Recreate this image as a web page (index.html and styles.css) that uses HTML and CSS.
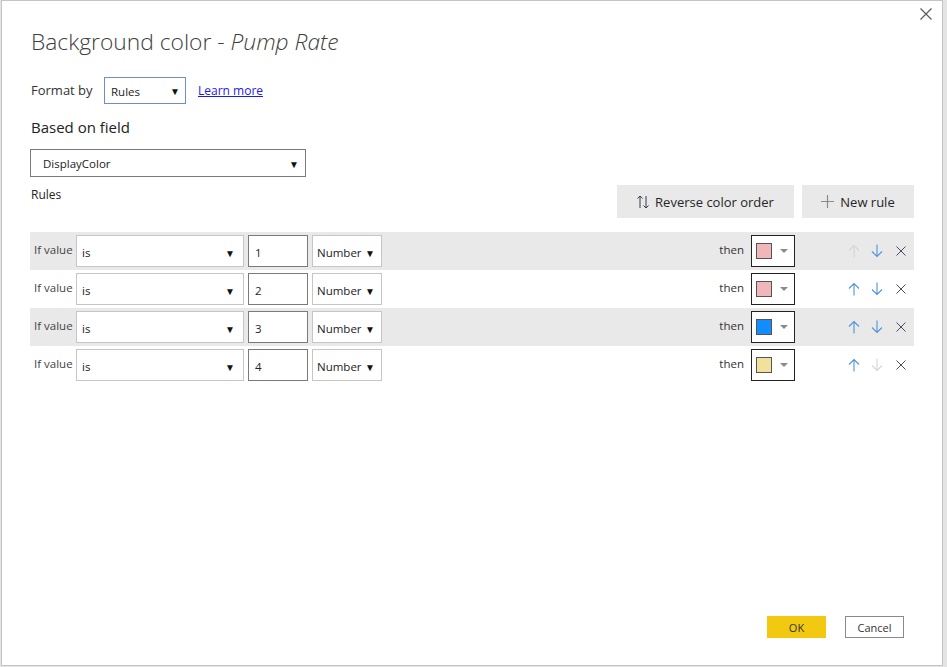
FILE: index.html
```html
<!DOCTYPE html>
<html>
<head>
<meta charset="utf-8">
<link rel="stylesheet" href="styles.css">
</head>
<body>
<div class="page">
  <div class="dialog">
    <div class="topbar">
      <svg class="close" width="12" height="12" viewBox="0 0 12 12"><path d="M0.5 0.5 L11.5 11.5 M11.5 0.5 L0.5 11.5" stroke="#5a5a5a" stroke-width="1.2" fill="none"/></svg>
    </div>
    <div class="content">
      <h1 class="title">Background color - <em>Pump Rate</em></h1>
      <div class="format-row">
        <span class="label">Format by</span>
        <div class="select select-format"><span>Rules</span><span class="arrow">&#9660;</span></div>
        <a class="link" href="#">Learn more</a>
      </div>
      <div class="field-label">Based on field</div>
      <div class="select select-field"><span>DisplayColor</span><span class="arrow">&#9660;</span></div>
      <div class="rules-head">
        <span class="rules-label">Rules</span>
        <div class="actions">
          <button class="btn">
            <svg width="12" height="14" viewBox="0 0 12 14"><path d="M3 1 V13 M0.5 3.5 L3 1 L5.5 3.5 M9 1 V13 M6.5 10.5 L9 13 L11.5 10.5" stroke="#3b3b4f" stroke-width="1" fill="none"/></svg>
            Reverse color order
          </button>
          <button class="btn btn-new">
            <svg width="13" height="13" viewBox="0 0 13 13"><path d="M6.5 0 V13 M0 6.5 H13" stroke="#8a8a8a" stroke-width="1.2" fill="none"/></svg>
            New rule
          </button>
        </div>
      </div>

      <div class="rules">
        <div class="rule shaded">
          <span class="if">If value</span>
          <div class="select sel-is"><span>is</span><span class="arrow">&#9660;</span></div>
          <div class="num">1</div>
          <div class="select sel-type"><span>Number</span><span class="arrow">&#9660;</span></div>
          <span class="then">then</span>
          <div class="picker"><span class="swatch pink"></span><span class="caret"></span></div>
          <div class="ops">
            <svg class="op" width="14" height="14" viewBox="0 0 14 14"><path d="M7 1.5 V13.5 M2 6.5 L7 1.5 L12 6.5" stroke="#d6d6d6" stroke-width="1.1" fill="none"/></svg>
            <svg class="op" width="14" height="14" viewBox="0 0 14 14"><path d="M7 0.5 V12.5 M2 7.5 L7 12.5 L12 7.5" stroke="#4f94d8" stroke-width="1.1" fill="none"/></svg>
            <svg class="op x" width="10" height="10" viewBox="0 0 10 10"><path d="M0.5 0.5 L9.5 9.5 M9.5 0.5 L0.5 9.5" stroke="#4a4a5a" stroke-width="1" fill="none"/></svg>
          </div>
        </div>
        <div class="rule">
          <span class="if">If value</span>
          <div class="select sel-is"><span>is</span><span class="arrow">&#9660;</span></div>
          <div class="num">2</div>
          <div class="select sel-type"><span>Number</span><span class="arrow">&#9660;</span></div>
          <span class="then">then</span>
          <div class="picker"><span class="swatch pink"></span><span class="caret"></span></div>
          <div class="ops">
            <svg class="op" width="14" height="14" viewBox="0 0 14 14"><path d="M7 1.5 V13.5 M2 6.5 L7 1.5 L12 6.5" stroke="#4f94d8" stroke-width="1.1" fill="none"/></svg>
            <svg class="op" width="14" height="14" viewBox="0 0 14 14"><path d="M7 0.5 V12.5 M2 7.5 L7 12.5 L12 7.5" stroke="#4f94d8" stroke-width="1.1" fill="none"/></svg>
            <svg class="op x" width="10" height="10" viewBox="0 0 10 10"><path d="M0.5 0.5 L9.5 9.5 M9.5 0.5 L0.5 9.5" stroke="#4a4a5a" stroke-width="1" fill="none"/></svg>
          </div>
        </div>
        <div class="rule shaded">
          <span class="if">If value</span>
          <div class="select sel-is"><span>is</span><span class="arrow">&#9660;</span></div>
          <div class="num">3</div>
          <div class="select sel-type"><span>Number</span><span class="arrow">&#9660;</span></div>
          <span class="then">then</span>
          <div class="picker"><span class="swatch blue"></span><span class="caret"></span></div>
          <div class="ops">
            <svg class="op" width="14" height="14" viewBox="0 0 14 14"><path d="M7 1.5 V13.5 M2 6.5 L7 1.5 L12 6.5" stroke="#4f94d8" stroke-width="1.1" fill="none"/></svg>
            <svg class="op" width="14" height="14" viewBox="0 0 14 14"><path d="M7 0.5 V12.5 M2 7.5 L7 12.5 L12 7.5" stroke="#4f94d8" stroke-width="1.1" fill="none"/></svg>
            <svg class="op x" width="10" height="10" viewBox="0 0 10 10"><path d="M0.5 0.5 L9.5 9.5 M9.5 0.5 L0.5 9.5" stroke="#4a4a5a" stroke-width="1" fill="none"/></svg>
          </div>
        </div>
        <div class="rule">
          <span class="if">If value</span>
          <div class="select sel-is"><span>is</span><span class="arrow">&#9660;</span></div>
          <div class="num">4</div>
          <div class="select sel-type"><span>Number</span><span class="arrow">&#9660;</span></div>
          <span class="then">then</span>
          <div class="picker"><span class="swatch yellow"></span><span class="caret"></span></div>
          <div class="ops">
            <svg class="op" width="14" height="14" viewBox="0 0 14 14"><path d="M7 1.5 V13.5 M2 6.5 L7 1.5 L12 6.5" stroke="#4f94d8" stroke-width="1.1" fill="none"/></svg>
            <svg class="op" width="14" height="14" viewBox="0 0 14 14"><path d="M7 0.5 V12.5 M2 7.5 L7 12.5 L12 7.5" stroke="#d6d6d6" stroke-width="1.1" fill="none"/></svg>
            <svg class="op x" width="10" height="10" viewBox="0 0 10 10"><path d="M0.5 0.5 L9.5 9.5 M9.5 0.5 L0.5 9.5" stroke="#4a4a5a" stroke-width="1" fill="none"/></svg>
          </div>
        </div>
      </div>
    </div>
    <div class="footer">
      <button class="ok">OK</button>
      <button class="cancel">Cancel</button>
    </div>
  </div>
</div>
</body>
</html>
```

FILE: styles.css
```css
* { box-sizing: border-box; }
html, body { margin: 0; padding: 0; }
body {
  background: #e4e4e4;
  font-family: "Open Sans", "Noto Sans", sans-serif;
  color: #252525;
  width: 947px;
  height: 667px;
  overflow: hidden;
}
.page {
  padding-left: 1px;
  display: flex;
}
.dialog {
  width: 942px;
  height: 666px;
  background: #fff;
  border: 1px solid #c4c4c4;
  display: flex;
  flex-direction: column;
}
.topbar {
  height: 25px;
  display: flex;
  justify-content: flex-end;
  align-items: flex-start;
  padding-top: 7px;
  padding-right: 10px;
}
.content {
  padding: 0 28px 0 28px;
  display: flex;
  flex-direction: column;
}
.title {
  margin: 0;
  padding-left: 1px;
  font-weight: 300;
  font-size: 22.8px;
  line-height: 32px;
  color: #404040;
}
.title em { font-style: italic; }
.format-row {
  margin-top: 19px;
  display: flex;
  align-items: center;
  height: 26px;
}
.label {
  font-size: 13px;
  padding-left: 1px;
  width: 74px;
  color: #333;
}
.select {
  display: flex;
  align-items: center;
  justify-content: space-between;
  background: #fff;
  font-size: 11.5px;
  color: #222;
}
.arrow {
  font-size: 10px;
  color: #111;
}
.select-format {
  width: 82px;
  height: 27px;
  border: 1px solid #6f8fc4;
  padding: 2px 5px 0 6px;
}
.link {
  margin-left: 12px;
  font-size: 12px;
  color: #1a1aee;
  text-decoration: underline;
}
.field-label {
  margin-top: 13px;
  font-size: 15px;
  line-height: 22px;
  padding-left: 1px;
  color: #222;
}
.select-field {
  margin-top: 11px;
  width: 276px;
  height: 28px;
  border: 1px solid #7a7a7a;
  padding: 1px 6px 0 12px;
}
.rules-head {
  margin-top: 8px;
  display: flex;
  justify-content: space-between;
  align-items: flex-start;
}
.rules-label {
  font-size: 12px;
  line-height: 20px;
  padding-left: 1px;
}
.actions {
  display: flex;
  gap: 8px;
}
.btn {
  height: 33px;
  border: none;
  background: #e9e9e9;
  font-family: inherit;
  font-size: 13px;
  color: #252525;
  display: flex;
  align-items: center;
  justify-content: center;
  gap: 6px;
  width: 177px;
  padding: 0;
}
.btn-new { width: 112px; }
.rules {
  margin-top: 14px;
  display: flex;
  flex-direction: column;
}
.rule {
  height: 38px;
  display: flex;
  align-items: center;
  padding-left: 4px;
}
.rule.shaded { background: #e9e9e9; }
.if {
  width: 42px;
  font-size: 11.5px;
  color: #444;
  margin-top: -4px;
}
.sel-is {
  width: 168px;
  height: 32px;
  border: 1px solid #c6c6c6;
  padding: 3px 8px 0 5px;
}
.num {
  margin-left: 4px;
  width: 60px;
  height: 32px;
  border: 1px solid #7a7a7a;
  background: #fff;
  font-size: 11.5px;
  display: flex;
  align-items: center;
  padding: 3px 0 0 6px;
}
.sel-type {
  margin-left: 4px;
  width: 70px;
  height: 32px;
  border: 1px solid #c6c6c6;
  padding: 3px 6px 0 4px;
}
.then {
  margin-left: auto;
  font-size: 11.5px;
  color: #333;
  margin-top: -4px;
}
.picker {
  margin-left: 7px;
  width: 44px;
  height: 32px;
  border: 1px solid #222;
  background: #fff;
  display: flex;
  align-items: center;
  padding-left: 4px;
}
.swatch {
  width: 16px;
  height: 16px;
  border: 1px solid #555;
  margin-top: -1px;
}
.pink { background: #f0b7ba; }
.blue { background: #118dff; }
.yellow { background: #f2e19b; }
.caret {
  margin-left: 8px;
  width: 0;
  height: 0;
  border-left: 4px solid transparent;
  border-right: 4px solid transparent;
  border-top: 4px solid #8a8a8a;
}
.ops {
  width: 119px;
  display: flex;
  align-items: center;
  padding-left: 52px;
  gap: 9px;
}
.op.x { margin-left: 3px; }
.footer {
  margin-top: auto;
  display: flex;
  justify-content: flex-end;
  gap: 19px;
  padding: 0 38px 27px 0;
}
.ok, .cancel {
  width: 59px;
  height: 22px;
  font-family: inherit;
  font-size: 11px;
  padding: 0;
  color: #333;
}
.ok {
  background: #f2c811;
  border: none;
}
.cancel {
  background: #fff;
  border: 1px solid #8a8a8a;
}
```
